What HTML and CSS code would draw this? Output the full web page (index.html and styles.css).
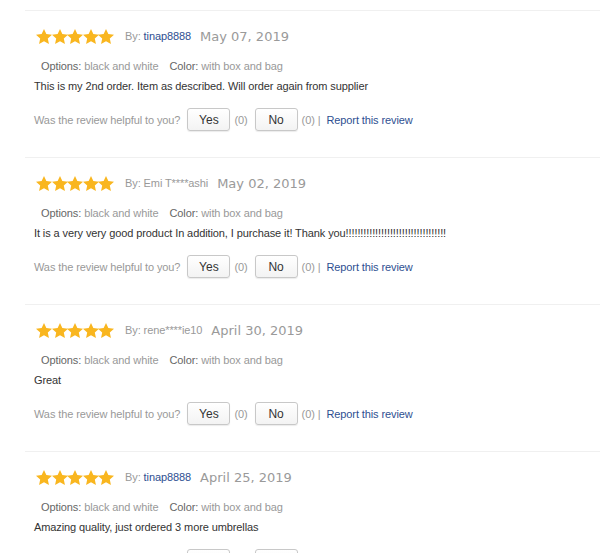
FILE: index.html
```html
<!DOCTYPE html>
<html>
<head>
<meta charset="utf-8">
<link rel="stylesheet" href="styles.css">
</head>
<body>
<svg width="0" height="0" class="defs">
  <defs>
    <symbol id="star" viewBox="0 0 16 16">
      <path d="M8 0.4 L10.35 5.56 L16 6.2 L11.8 10.04 L12.94 15.6 L8 12.8 L3.06 15.6 L4.2 10.04 L0 6.2 L5.65 5.56 Z" fill="#f9b61f"/>
    </symbol>
  </defs>
</svg>
<div class="reviews">
  <div class="review">
    <div class="head">
      <span class="stars"><svg><use href="#star"/></svg><svg><use href="#star"/></svg><svg><use href="#star"/></svg><svg><use href="#star"/></svg><svg><use href="#star"/></svg></span>
      <span class="by">By: <a class="user link">tinap8888</a></span>
      <span class="date">May 07, 2019</span>
    </div>
    <div class="opts"><span class="lbl">Options:</span> <span class="val">black and white</span><span class="lbl gap">Color:</span> <span class="val">with box and bag</span></div>
    <div class="text">This is my 2nd order. Item as described. Will order again from supplier</div>
    <div class="help">
      <span class="q">Was the review helpful to you?</span>
      <button class="btn">Yes</button><span class="cnt">(0)</span>
      <button class="btn">No</button><span class="cnt">(0) |</span>
      <a class="link report">Report this review</a>
    </div>
  </div>
  <div class="review">
    <div class="head">
      <span class="stars"><svg><use href="#star"/></svg><svg><use href="#star"/></svg><svg><use href="#star"/></svg><svg><use href="#star"/></svg><svg><use href="#star"/></svg></span>
      <span class="by">By: Emi T****ashi</span>
      <span class="date">May 02, 2019</span>
    </div>
    <div class="opts"><span class="lbl">Options:</span> <span class="val">black and white</span><span class="lbl gap">Color:</span> <span class="val">with box and bag</span></div>
    <div class="text">It is a very very good product In addition, I purchase it! Thank you!!!!!!!!!!!!!!!!!!!!!!!!!!!!!!!!!!</div>
    <div class="help">
      <span class="q">Was the review helpful to you?</span>
      <button class="btn">Yes</button><span class="cnt">(0)</span>
      <button class="btn">No</button><span class="cnt">(0) |</span>
      <a class="link report">Report this review</a>
    </div>
  </div>
  <div class="review">
    <div class="head">
      <span class="stars"><svg><use href="#star"/></svg><svg><use href="#star"/></svg><svg><use href="#star"/></svg><svg><use href="#star"/></svg><svg><use href="#star"/></svg></span>
      <span class="by">By: rene****ie10</span>
      <span class="date">April 30, 2019</span>
    </div>
    <div class="opts"><span class="lbl">Options:</span> <span class="val">black and white</span><span class="lbl gap">Color:</span> <span class="val">with box and bag</span></div>
    <div class="text">Great</div>
    <div class="help">
      <span class="q">Was the review helpful to you?</span>
      <button class="btn">Yes</button><span class="cnt">(0)</span>
      <button class="btn">No</button><span class="cnt">(0) |</span>
      <a class="link report">Report this review</a>
    </div>
  </div>
  <div class="review">
    <div class="head">
      <span class="stars"><svg><use href="#star"/></svg><svg><use href="#star"/></svg><svg><use href="#star"/></svg><svg><use href="#star"/></svg><svg><use href="#star"/></svg></span>
      <span class="by">By: <a class="user link">tinap8888</a></span>
      <span class="date">April 25, 2019</span>
    </div>
    <div class="opts"><span class="lbl">Options:</span> <span class="val">black and white</span><span class="lbl gap">Color:</span> <span class="val">with box and bag</span></div>
    <div class="text">Amazing quality, just ordered 3 more umbrellas</div>
    <div class="help">
      <span class="q">Was the review helpful to you?</span>
      <button class="btn">Yes</button><span class="cnt">(0)</span>
      <button class="btn">No</button><span class="cnt">(0) |</span>
      <a class="link report">Report this review</a>
    </div>
  </div>
</div>
</body>
</html>
```
FILE: styles.css
```css
html, body {
  margin: 0;
  padding: 0;
  background: #fff;
}
body {
  font-family: "Liberation Sans", Arial, sans-serif;
  font-size: 11px;
  letter-spacing: -0.1px;
  color: #333;
  overflow: hidden;
  height: 553px;
}
.defs {
  position: absolute;
  width: 0;
  height: 0;
}
.reviews {
  padding-top: 10px;
  margin-left: 25px;
}
.review {
  border-top: 1px solid #f0f0f0;
  padding: 16px 0 26px 9px;
}
.head {
  display: flex;
  align-items: center;
  height: 18px;
}
.stars {
  display: flex;
  margin-left: 2px;
}
.stars svg {
  width: 16px;
  height: 17px;
  margin-right: -0.4px;
}
.by {
  margin-left: 11px;
  color: #999;
}
.link {
  color: #2e4f91;
  text-decoration: none;
}
.date {
  margin-left: 9px;
  font-family: "DejaVu Sans", Verdana, sans-serif;
  font-size: 13px;
  letter-spacing: 0;
  color: #9a9a9a;
}
.opts {
  margin-top: 12px;
  line-height: 18px;
  padding-left: 7px;
}
.lbl { color: #666; }
.val { color: #999; }
.gap { margin-left: 11px; }
.text {
  margin-top: 2px;
  line-height: 18px;
  color: #333;
}
.help {
  margin-top: 13px;
  display: flex;
  align-items: center;
  height: 23px;
  color: #999;
}
.btn {
  width: 43px;
  height: 23px;
  border: 1px solid #c8c8c8;
  border-radius: 3px;
  background: linear-gradient(#fff, #f3f3f3);
  font-family: "Liberation Sans", Arial, sans-serif;
  font-size: 12px;
  color: #333;
  padding: 0;
  box-shadow: 0 1px 1px rgba(0,0,0,0.08);
}
.q { margin-right: 7px; }
.cnt { margin: 0 4px; }
.cnt + .btn { margin-left: 3px; }
.report { margin-left: 2px; }
```
